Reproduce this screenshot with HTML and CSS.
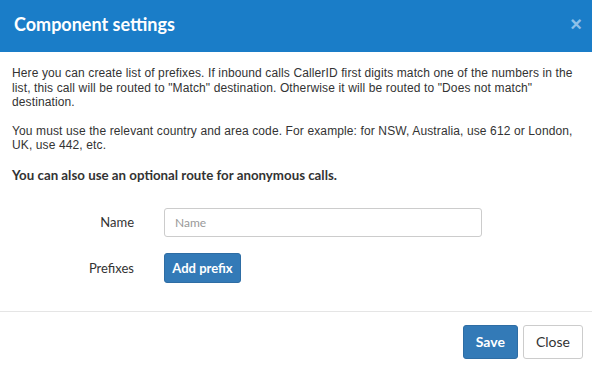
FILE: index.html
```html
<!DOCTYPE html>
<html lang="en">
<head>
  <meta charset="UTF-8" />
  <title>Component settings</title>
  <link rel="stylesheet" href="styles.css">
</head>
<body>
  <div class="modal">
    <div class="modal-header">
      <h4 class="modal-title">Component settings</h4>
      <span class="close">&times;</span>
    </div>

    <div class="modal-body">
      <p>Here you can create list of prefixes. If inbound calls CallerID first digits match one of the numbers in the list, this call will be routed to "Match" destination. Otherwise it will be routed to "Does not match" destination.</p>
      <p>You must use the relevant country and area code. For example: for NSW, Australia, use 612 or London, UK, use 442, etc.</p>
      <h5 class="note">You can also use an optional route for anonymous calls.</h5>

      <div class="form-row">
        <label class="form-label">Name</label>
        <input type="text" class="form-input" placeholder="Name" />
      </div>
      <div class="form-row">
        <label class="form-label">Prefixes</label>
        <button class="btn btn-primary btn-add">Add prefix</button>
      </div>
    </div>

    <div class="modal-footer">
      <button class="btn btn-primary">Save</button>
      <button class="btn btn-default">Close</button>
    </div>
  </div>
</body>
</html>
```

FILE: styles.css
```css
body {
  margin: 0;
  background: #fff;
  font-family: "Liberation Sans", Arial, sans-serif;
  color: #333;
}

.modal {
  width: 592px;
  height: 371px;
  display: flex;
  flex-direction: column;
}

.modal-header {
  height: 52px;
  background: #1a7dc8;
  display: flex;
  align-items: center;
  justify-content: space-between;
  padding: 0 10px 4px 14px;
  box-sizing: border-box;
}

.modal-title {
  margin: 0;
  color: #fff;
  font-family: Lato, sans-serif;
  font-size: 18px;
  font-weight: bold;
}

.close {
  color: #8ec0e8;
  font-size: 20px;
  font-weight: bold;
  line-height: 1;
}

.modal-body {
  padding: 14px 12px 0;
  flex: 1;
}

.modal-body p {
  margin: 0 0 14px;
  font-size: 12px;
  line-height: 14.5px;
  letter-spacing: 0.12px;
}

.note {
  margin: -2px 0 23px;
  font-family: Lato, sans-serif;
  font-size: 13.3px;
  line-height: 20px;
  font-weight: bold;
}

.form-row {
  display: flex;
  align-items: center;
  margin-bottom: 16px;
}

.form-label {
  width: 122px;
  text-align: right;
  padding-right: 30px;
  font-family: Lato, sans-serif;
  font-size: 13px;
  color: #333;
}

.form-input {
  width: 318px;
  height: 29px;
  box-sizing: border-box;
  padding: 4px 10px;
  border: 1px solid #ccc;
  border-radius: 3px;
  font-family: Lato, sans-serif;
  font-size: 12px;
  color: #555;
}

.form-input::placeholder {
  color: #999;
}

.btn {
  font-family: Lato, sans-serif;
  font-size: 13px;
  border-radius: 3px;
  border: 1px solid transparent;
  padding: 0 12px;
  cursor: pointer;
}

.btn-primary {
  background: #337ab7;
  border-color: #2e6da4;
  color: #fff;
  font-weight: bold;
}

.btn-add {
  height: 30px;
  width: 77px;
  padding: 0;
}

.modal-footer {
  border-top: 1px solid #e5e5e5;
  height: 59px;
  display: flex;
  justify-content: flex-end;
  align-items: center;
  gap: 5px;
  padding: 0 9px 0 0;
}

.modal-footer .btn {
  height: 34px;
  font-size: 14px;
}

.btn-default {
  background: #fff;
  border-color: #ccc;
  color: #333;
}
```
